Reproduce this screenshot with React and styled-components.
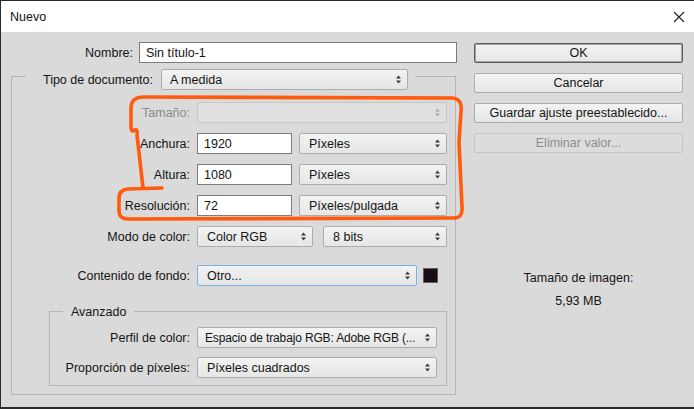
import { createGlobalStyle, styled } from "styled-components"

const GlobalStyle = createGlobalStyle`
	html, body {
		margin: 0;
		padding: 0;
		background: #dadada;
	}
	body {
		font-family: "Liberation Sans", Arial, sans-serif;
		font-size: 12.5px;
		color: #141414;
	}
`

const Window = styled.div`
	position: relative;
	width: 694px;
	height: 409px;
	box-sizing: border-box;
	border-top: 1px solid #2b2b2b;
	border-left: 1px solid #2b2b2b;
	border-bottom: 2px solid #2b2b2b;
	background: #dadada;
	display: flex;
	flex-direction: column;
`

const TitleBar = styled.div`
	height: 31px;
	flex: none;
	background: #fff;
	display: flex;
	align-items: center;
	justify-content: space-between;
	padding: 0 9px 0 9px;
`

const Body = styled.div`
	flex: 1;
	display: grid;
	grid-template-columns: 446px 209px;
	column-gap: 17px;
	align-items: start;
	padding: 10px 0 0 10px;
`

const Column = styled.div`
	display: flex;
	flex-direction: column;
`

const NameRow = styled.div`
	display: grid;
	grid-template-columns: 122px 318px;
	column-gap: 6px;
	align-items: center;
`

const Label = styled.span`
	text-align: right;
	white-space: nowrap;
	color: ${(p) => (p.$disabled ? "#8b8b8b" : "#141414")};
`

const TextInput = styled.div`
	height: 21px;
	width: ${(p) => p.$w || 0}px;
	box-sizing: border-box;
	border: 1px solid #7d7d7d;
	background: #fff;
	padding: 0 6px;
	display: flex;
	align-items: center;
	white-space: nowrap;
`

const SelectBox = styled.div`
	height: 21px;
	width: ${(p) => p.$w}px;
	box-sizing: border-box;
	border: 1px solid ${(p) => (p.$focus ? "#7ab3e8" : p.$disabled ? "#c6c6c6" : "#acacac")};
	border-radius: 2px;
	background: ${(p) => (p.$disabled ? "#e0e0e0" : "linear-gradient(#f3f3f3, #e6e6e6)")};
	padding: 0 6px 0 ${(p) => p.$pl || 9}px;
	display: flex;
	align-items: center;
	white-space: nowrap;
	color: #141414;
`

const SelectText = styled.span`
	flex: 1;
	min-width: 0;
	overflow: hidden;
	font-size: ${(p) => (p.$tight ? "12px" : "inherit")};
	letter-spacing: ${(p) => (p.$tight ? "-0.15px" : "normal")};
`

const Arrows = styled.svg`
	flex: none;
	margin-left: 3px;
	fill: ${(p) => (p.$disabled ? "#adadad" : "#3a3a3a")};
`

const Group = styled.div`
	margin-top: 13px;
	width: 445px;
	box-sizing: border-box;
	border: 1px solid #b5b5b5;
	padding-bottom: 8px;
	display: flex;
	flex-direction: column;
`

const GroupHead = styled.div`
	align-self: flex-start;
	display: grid;
	grid-template-columns: 127px 247px;
	column-gap: 8px;
	align-items: center;
	margin: -8px 0 0 14px;
	padding-right: 7px;
	background: #dadada;
`

const Rows = styled.div`
	display: flex;
	flex-direction: column;
	gap: ${(p) => p.$gap || 10}px;
	margin-top: ${(p) => p.$mt || 0}px;
`

const FieldRow = styled.div`
	display: grid;
	grid-template-columns: ${(p) => p.$lw}px auto;
	column-gap: 7px;
	align-items: center;
	margin-top: ${(p) => p.$mt || 0}px;
`

const Controls = styled.div`
	display: flex;
	align-items: center;
	gap: ${(p) => p.$gap || 7}px;
`

const Swatch = styled.div`
	width: 15px;
	height: 15px;
	box-sizing: border-box;
	border: 1px solid #5e5e5e;
	background: #1a0c15;
`

const SubGroup = styled.div`
	margin: 25px 8px 0 37px;
	border: 1px solid #b5b5b5;
	padding-bottom: 7px;
	display: flex;
	flex-direction: column;
`

const Legend = styled.div`
	align-self: flex-start;
	margin: -8px 0 0 13px;
	padding: 0 8px;
	line-height: 16px;
	background: #dadada;
`

const ButtonStack = styled.div`
	display: flex;
	flex-direction: column;
	gap: 10px;
	padding-top: 1px;
`

const Button = styled.div`
	height: 20px;
	box-sizing: border-box;
	border: 1px solid ${(p) => (p.$primary ? "#5c5c5c" : p.$disabled ? "#c6c6c6" : "#adadad")};
	box-shadow: ${(p) => (p.$primary ? "inset 0 0 0 1px #a3a3a3" : "none")};
	border-radius: 2px;
	background: ${(p) => (p.$disabled ? "#dcdcdc" : "linear-gradient(#f3f3f3, #e6e6e6)")};
	color: ${(p) => (p.$disabled ? "#8d8d8d" : "#141414")};
	display: flex;
	align-items: center;
	justify-content: center;
`

const ImageInfo = styled.div`
	margin-top: 117px;
	display: flex;
	flex-direction: column;
	align-items: center;
	gap: 7px;
	line-height: 16px;
`

const Overlay = styled.svg`
	position: absolute;
	top: -1px;
	left: -1px;
	pointer-events: none;
`

function Select({ w, children, disabled, focus, pl, tight }) {
	return (
		<SelectBox $w={w} $disabled={disabled} $focus={focus} $pl={pl}>
			<SelectText $tight={tight}>{children}</SelectText>
			<Arrows width="5" height="9" viewBox="0 0 5 9" $disabled={disabled}>
				<path d="M0 3.5 L2.5 0.5 L5 3.5 Z" />
				<path d="M0 5.5 L5 5.5 L2.5 8.5 Z" />
			</Arrows>
		</SelectBox>
	)
}

export default function App() {
	return (
		<>
			<GlobalStyle />
			<Window>
				<TitleBar>
					<span>Nuevo</span>
					<svg width="12" height="12" viewBox="0 0 12 12">
						<path d="M1 1 L11 11 M11 1 L1 11" stroke="#1e1e1e" strokeWidth="1.1" />
					</svg>
				</TitleBar>
				<Body>
					<Column>
						<NameRow>
							<Label>Nombre:</Label>
							<TextInput $w={318}>Sin título-1</TextInput>
						</NameRow>
						<Group>
							<GroupHead>
								<Label>Tipo de documento:</Label>
								<Select w={247} pl={8}>A medida</Select>
							</GroupHead>
							<Rows $mt={12}>
								<FieldRow $lw={178}>
									<Label $disabled>Tamaño:</Label>
									<Select w={250} disabled></Select>
								</FieldRow>
								<FieldRow $lw={178}>
									<Label>Anchura:</Label>
									<Controls>
										<TextInput $w={95}>1920</TextInput>
										<Select w={148}>Píxeles</Select>
									</Controls>
								</FieldRow>
								<FieldRow $lw={178}>
									<Label>Altura:</Label>
									<Controls>
										<TextInput $w={95}>1080</TextInput>
										<Select w={148}>Píxeles</Select>
									</Controls>
								</FieldRow>
								<FieldRow $lw={178}>
									<Label>Resolución:</Label>
									<Controls>
										<TextInput $w={95}>72</TextInput>
										<Select w={148}>Píxeles/pulgada</Select>
									</Controls>
								</FieldRow>
								<FieldRow $lw={178}>
									<Label>Modo de color:</Label>
									<Controls $gap={10}>
										<Select w={116}>Color RGB</Select>
										<Select w={124}>8 bits</Select>
									</Controls>
								</FieldRow>
								<FieldRow $lw={178} $mt={8}>
									<Label>Contenido de fondo:</Label>
									<Controls $gap={6}>
										<Select w={220} focus>Otro...</Select>
										<Swatch />
									</Controls>
								</FieldRow>
							</Rows>
							<SubGroup>
								<Legend>Avanzado</Legend>
								<Rows $mt={7} $gap={9}>
									<FieldRow $lw={140}>
										<Label>Perfil de color:</Label>
										<Select w={240} pl={7} tight>Espacio de trabajo RGB: Adobe RGB (...</Select>
									</FieldRow>
									<FieldRow $lw={140}>
										<Label>Proporción de píxeles:</Label>
										<Select w={240}>Píxeles cuadrados</Select>
									</FieldRow>
								</Rows>
							</SubGroup>
						</Group>
					</Column>
					<Column>
						<ButtonStack>
							<Button $primary>OK</Button>
							<Button>Cancelar</Button>
							<Button>Guardar ajuste preestablecido...</Button>
							<Button $disabled>Eliminar valor...</Button>
						</ButtonStack>
						<ImageInfo>
							<span>Tamaño de imagen:</span>
							<span>5,93 MB</span>
						</ImageInfo>
					</Column>
				</Body>
				<Overlay width="694" height="409" viewBox="0 0 694 409">
					<path
						d="M162 188 L128 189 Q119 190 119 198 L119 211 Q119 219 128 219 L454 218 Q463 218 462 207 L459 142 L461 112 Q463 99 452 98 L144 97 Q131 97 131 108 L131 127 Q131 133 135 130 Q138 129 137 135 L143 188"
						fill="none"
						stroke="#ff5a0e"
						strokeWidth="3.6"
						strokeLinecap="round"
						strokeLinejoin="round"
					/>
				</Overlay>
			</Window>
		</>
	)
}
